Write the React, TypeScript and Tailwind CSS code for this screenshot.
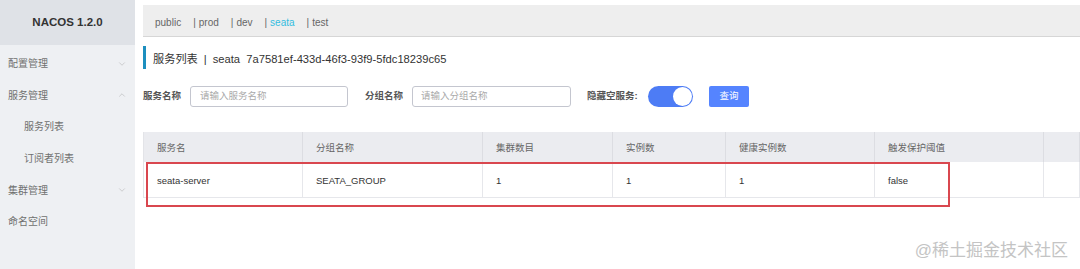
import { ChevronDown, ChevronUp } from "lucide-react"

const font = { fontFamily: '"Liberation Sans", "Noto Sans CJK SC", sans-serif' }

const menu = [
  { label: "配置管理", icon: "down", sub: false },
  { label: "服务管理", icon: "up", sub: false },
  { label: "服务列表", icon: null, sub: true },
  { label: "订阅者列表", icon: null, sub: true },
  { label: "集群管理", icon: "down", sub: false },
  { label: "命名空间", icon: null, sub: false },
]

const namespaces = ["public", "prod", "dev", "seata", "test"]

const columns = ["服务名", "分组名称", "集群数目", "实例数", "健康实例数", "触发保护阈值", ""]
const row = ["seata-server", "SEATA_GROUP", "1", "1", "1", "false", ""]

export default function App() {
  return (
    <div className="flex h-[269px] w-[1080px] overflow-hidden bg-white" style={font}>
      {/* Sidebar */}
      <aside className="flex w-[135px] shrink-0 flex-col bg-[#eef0f3]">
        <div className="flex h-[45px] items-center justify-center bg-[#dfe2e7] text-[11.5px] font-bold text-[#333]">
          NACOS 1.2.0
        </div>
        <nav className="flex flex-col pt-[3px]">
          {menu.map((item) => (
            <div
              key={item.label}
              className={`flex h-[31.6px] items-center justify-between pr-[8px] text-[10px] text-[#707070] ${
                item.sub ? "pl-[24px]" : "pl-[8px]"
              }`}
            >
              <span>{item.label}</span>
              {item.icon === "down" && <ChevronDown size={10} strokeWidth={1} className="text-[#999]" />}
              {item.icon === "up" && <ChevronUp size={10} strokeWidth={1} className="text-[#999]" />}
            </div>
          ))}
        </nav>
      </aside>

      {/* Main */}
      <main className="flex flex-1 flex-col pl-[8px] pt-[5px]">
        <div className="flex h-[32px] items-center gap-[5px] border-b border-[#d6d6d6] bg-[#eeeeee] px-[12px] pt-[3px] text-[10px] text-[#666]">
          {namespaces.map((ns, i) => (
            <span key={ns} className="flex items-center">
              {i > 0 && <span className="mr-[3px] ml-[7px]">|</span>}
              <span className={ns === "seata" ? "text-[#33bde0]" : ""}>{ns}</span>
            </span>
          ))}
        </div>

        {/* Title */}
        <div className="mt-[9px] flex h-[23px] items-center border-l-[3px] border-[#1d8fbf] pl-[7px] pt-[3px] text-[11.2px] text-[#333]">
          <span>服务列表</span>
          <span className="mx-[6px]">|</span>
          <span>seata&nbsp;&nbsp;7a7581ef-433d-46f3-93f9-5fdc18239c65</span>
        </div>

        {/* Search */}
        <div className="mt-[17px] flex h-[21px] items-center text-[9.5px]">
          <span className="w-[47px] font-bold text-[#555]">服务名称</span>
          <div className="flex h-[21px] w-[158px] items-center rounded-[3px] border border-[#c4c6cf] px-[9px] text-[#aaa]">
            请输入服务名称
          </div>
          <span className="ml-[17px] w-[47px] font-bold text-[#555]">分组名称</span>
          <div className="flex h-[21px] w-[159px] items-center rounded-[3px] border border-[#c4c6cf] px-[8px] text-[#aaa]">
            请输入分组名称
          </div>
          <span className="ml-[16px] w-[61px] font-bold text-[#555]">隐藏空服务:</span>
          <div className="flex h-[21px] w-[45px] items-center justify-end rounded-full bg-[#4d7cf5] pr-[1px]">
            <div className="h-[19px] w-[19px] rounded-full bg-white" />
          </div>
          <button className="ml-[16px] flex h-[21px] w-[40px] items-center justify-center rounded-[2px] bg-[#5584ff] text-white">
            查询
          </button>
        </div>

        {/* Table */}
        <div className="relative mt-[25px] text-[9.5px]">
          <div className="grid grid-cols-[159px_180px_130px_113px_149px_169px_1fr] border-l border-[#e3e4e8]">
            {columns.map((c, i) => (
              <div
                key={i}
                className="flex h-[30px] items-center border-r border-[#dcdde2] bg-[#ebecf0] px-[13px] pt-[2px] text-[#666]"
              >
                {c}
              </div>
            ))}
            {row.map((c, i) => (
              <div
                key={i}
                className="flex h-[36px] items-center border-r border-b border-[#e6e7eb] px-[13px] pt-[4px] text-[#333]"
              >
                {c}
              </div>
            ))}
          </div>
          {/* highlight annotation */}
          <div className="absolute left-[3px] top-[30px] h-[45px] w-[804px] border-2 border-[#d9474f]" />
        </div>

        <div className="mt-auto mb-[6px] self-end pr-[12px] text-[17px] text-[#c4c4c4]">
          @稀土掘金技术社区
        </div>
      </main>
    </div>
  )
}
